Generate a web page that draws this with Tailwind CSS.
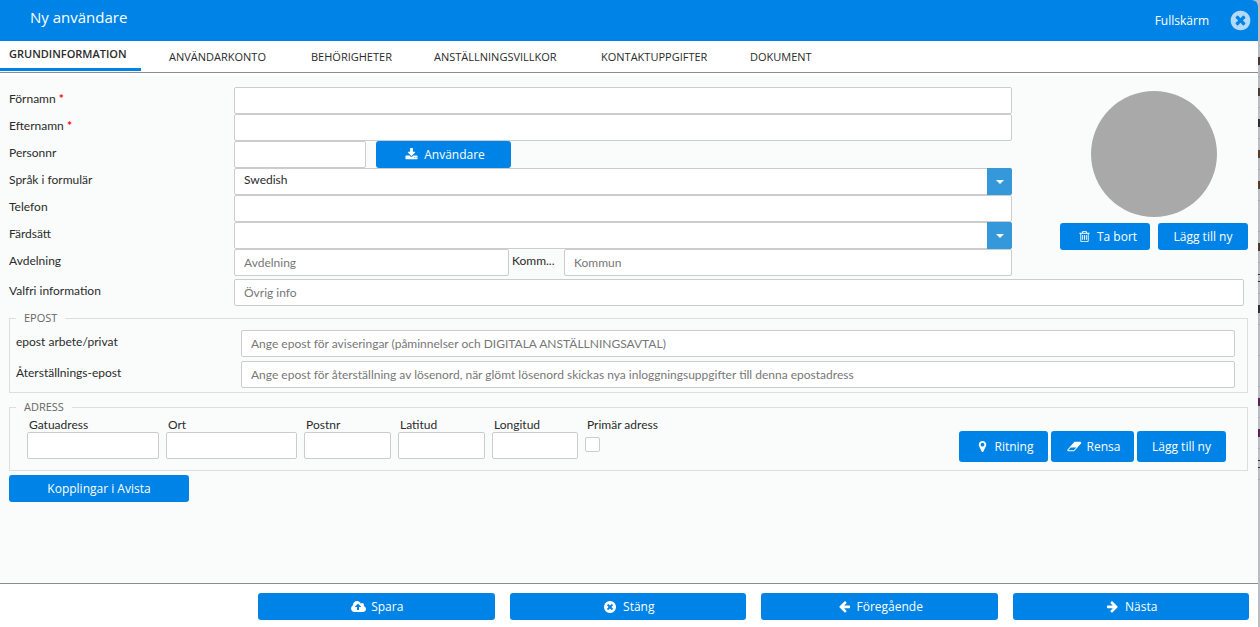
<!DOCTYPE html>
<html lang="sv">
<head>
  <meta charset="UTF-8" />
  <meta name="viewport" content="width=device-width, initial-scale=1.0"/>
  <title>Ny användare</title>
  <script src="https://cdn.jsdelivr.net/npm/@tailwindcss/browser@4"></script>
</head>
<body class="flex min-h-screen overflow-hidden bg-[#b9bcc4] font-['Lato','Open_Sans',sans-serif] text-[12px] text-[#2b2b2b]">

  <!-- Icons -->
  <svg class="hidden">
    <symbol id="i-close" viewBox="0 0 1792 1792"><path d="M1277 1122q0-26-19-45l-181-181 181-181q19-19 19-45 0-27-19-46l-90-90q-19-19-46-19-26 0-45 19l-181 181-181-181q-19-19-45-19-27 0-46 19l-90 90q-19 19-19 46 0 26 19 45l181 181-181 181q-19 19-19 45 0 27 19 46l90 90q19 19 46 19 26 0 45-19l181-181 181 181q19 19 45 19 27 0 46-19l90-90q19-19 19-46zm387-226q0 209-103 385.5t-279.5 279.5-385.5 103-385.5-103-279.5-279.5-103-385.5 103-385.5 279.5-279.5 385.5-103 385.5 103 279.5 279.5 103 385.5z"/></symbol>
    <symbol id="i-download" viewBox="0 0 1792 1792"><path d="M1344 1344q0-26-19-45t-45-19-45 19-19 45 19 45 45 19 45-19 19-45zm256 0q0-26-19-45t-45-19-45 19-19 45 19 45 45 19 45-19 19-45zm128-224v320q0 40-28 68t-68 28h-1472q-40 0-68-28t-28-68v-320q0-40 28-68t68-28h465l135 136q58 56 136 56t136-56l136-136h464q40 0 68 28t28 68zm-325-569q17 41-14 70l-448 448q-18 19-45 19t-45-19l-448-448q-31-29-14-70 17-39 59-39h256v-448q0-26 19-45t45-19h256q26 0 45 19t19 45v448h256q42 0 59 39z"/></symbol>
    <symbol id="i-trash" viewBox="0 0 1792 1792"><path d="M704 736v576q0 14-9 23t-23 9h-64q-14 0-23-9t-9-23v-576q0-14 9-23t23-9h64q14 0 23 9t9 23zm256 0v576q0 14-9 23t-23 9h-64q-14 0-23-9t-9-23v-576q0-14 9-23t23-9h64q14 0 23 9t9 23zm256 0v576q0 14-9 23t-23 9h-64q-14 0-23-9t-9-23v-576q0-14 9-23t23-9h64q14 0 23 9t9 23zm128 724v-948h-896v948q0 22 7 40.5t14.5 27 10.5 8.5h832q3 0 10.5-8.5t14.5-27 7-40.5zm-672-1076h448l-48-117q-7-9-17-11h-317q-10 2-17 11zm928 32v64q0 14-9 23t-23 9h-96v948q0 83-47 143.5t-113 60.5h-832q-66 0-113-58.5t-47-141.5v-952h-96q-14 0-23-9t-9-23v-64q0-14 9-23t23-9h309l70-167q15-37 54-63t79-26h320q40 0 79 26t54 63l70 167h309q14 0 23 9t9 23z"/></symbol>
    <symbol id="i-marker" viewBox="0 0 1792 1792"><path d="M1152 640q0-106-75-181t-181-75-181 75-75 181 75 181 181 75 181-75 75-181zm256 0q0 109-33 179l-364 774q-16 33-47.5 52t-67.5 19-67.5-19-46.5-52l-365-774q-33-70-33-179 0-212 150-362t362-150 362 150 150 362z"/></symbol>
    <symbol id="i-eraser" viewBox="-64 0 1984 1792"><path d="M832 1408l336-384h-768l-336 384h768zm1013-1077q15 34 9.5 71.5t-30.5 65.5l-896 1024q-38 44-96 44h-768q-38 0-69.5-20.5t-47.5-54.5q-15-34-9.5-71.5t30.5-65.5l896-1024q38-44 96-44h768q38 0 69.5 20.5t47.5 54.5z"/></symbol>
    <symbol id="i-upload" viewBox="-64 0 1920 1792"><path d="M1216 864q0-14-9-23l-352-352q-9-9-23-9t-23 9l-351 351q-10 12-10 24 0 14 9 23t23 9h224v352q0 13 9.5 22.5t22.5 9.5h192q13 0 22.5-9.5t9.5-22.5v-352h224q13 0 22.5-9.5t9.5-22.5zm640 288q0 159-112.5 271.5t-271.5 112.5h-1088q-185 0-316.5-131.5t-131.5-316.5q0-130 70-240t188-165q-2-30-2-43 0-212 150-362t362-150q156 0 285.5 87t188.5 231q71-62 166-62 106 0 181 75t75 181q0 76-41 138 130 31 213.5 135.5t83.5 238.5z"/></symbol>
    <symbol id="i-arrow" viewBox="0 0 1792 1792"><path d="M1664 896v128q0 53-32.5 90.5t-84.5 37.5h-704l293 294q38 36 38 90t-38 90l-75 76q-37 37-90 37-52 0-91-37l-651-652q-37-37-37-90 0-52 37-91l651-650q38-38 91-38 52 0 90 38l75 74q38 38 38 91t-38 91l-293 293h704q52 0 84.5 37.5t32.5 90.5z"/></symbol>
  </svg>

  <div class="flex min-w-0 flex-1 flex-col overflow-hidden rounded-tr-md bg-white">
    <header class="flex h-[41px] items-center bg-[#0083e6] pr-[6px] pl-[30px] font-['Open_Sans',sans-serif] text-white">
      <h1 class="mr-auto pb-[6px] text-[15px]">Ny användare</h1>
      <button type="button" class="mr-5">Fullskärm</button>
      <button type="button" aria-label="Stäng fönster"><svg class="size-[23px] fill-white/70"><use href="#i-close"/></svg></button>
    </header>

    <nav class="flex h-8 border-b border-[#8c8c8c] font-['Open_Sans',sans-serif] text-[11px] leading-8">
      <a href="#" class="mr-7 h-[30px] w-[141px] border-b-3 border-[#0083e6] pl-[9px] leading-[26px] font-semibold">GRUNDINFORMATION</a>
      <a href="#" class="w-[142px]">ANVÄNDARKONTO</a>
      <a href="#" class="w-[123px]">BEHÖRIGHETER</a>
      <a href="#" class="w-[167px]">ANSTÄLLNINGSVILLKOR</a>
      <a href="#" class="w-[149px]">KONTAKTUPPGIFTER</a>
      <a href="#">DOKUMENT</a>
    </nav>

    <main class="mt-[3px] flex-1 bg-[#fafcfb] pt-[11px] pr-[10px] pl-[9px]">
      <div class="flex justify-between">
        <div class="grid flex-1 grid-cols-[225px_1fr] leading-6">
          <label for="fornamn">Förnamn <span class="font-bold text-[red]">*</span></label>
          <input id="fornamn" required class="h-[27px] w-full rounded-xs border border-[#ccc] bg-white px-[9px]">
          <label for="efternamn">Efternamn <span class="font-bold text-[red]">*</span></label>
          <input id="efternamn" required class="h-[27px] w-full rounded-xs border border-[#ccc] bg-white px-[9px]">
          <label for="personnr">Personnr</label>
          <div class="flex gap-[10px]">
            <input id="personnr" class="h-[27px] w-[132px] rounded-xs border border-[#ccc] bg-white px-[9px]">
            <button type="button" class="flex h-[27px] w-[135px] items-center justify-center gap-[6px] rounded-[3px] bg-[#0083e6] pl-[3px] font-['Open_Sans',sans-serif] text-white"><svg class="size-[13px] fill-current"><use href="#i-download"/></svg>Användare</button>
          </div>
          <label for="sprak">Språk i formulär</label>
          <div class="relative">
            <select id="sprak" class="block h-[27px] w-full appearance-none rounded-xs border border-[#ccc] bg-white px-[9px] pb-1 leading-5">
              <option>Swedish</option>
            </select>
            <span class="pointer-events-none absolute top-0 right-0 flex h-[27px] w-[25px] items-center justify-center rounded-r-xs bg-[#3598db]"><svg class="h-1 w-2 fill-white" viewBox="0 0 8 4"><path d="M0 0h8L4 4z"/></svg></span>
          </div>
          <label for="telefon">Telefon</label>
          <input id="telefon" type="tel" class="h-[27px] w-full rounded-xs border border-[#ccc] bg-white px-[9px]">
          <label for="fardsatt">Färdsätt</label>
          <div class="relative">
            <select id="fardsatt" class="block h-[27px] w-full appearance-none rounded-xs border border-[#ccc] bg-white px-[9px] pb-1 leading-5">
              <option></option>
            </select>
            <span class="pointer-events-none absolute top-0 right-0 flex h-[27px] w-[25px] items-center justify-center rounded-r-xs bg-[#3598db]"><svg class="h-1 w-2 fill-white" viewBox="0 0 8 4"><path d="M0 0h8L4 4z"/></svg></span>
          </div>
          <label for="avdelning">Avdelning</label>
          <div class="flex">
            <input id="avdelning" placeholder="Avdelning" class="h-[27px] w-[275px] rounded-xs border border-[#ccc] bg-white px-[9px] placeholder:text-[#777]">
            <label for="kommun" class="mr-[6px] ml-[3px] w-[46px]">Komm...</label>
            <input id="kommun" placeholder="Kommun" class="h-[27px] min-w-0 flex-1 rounded-xs border border-[#ccc] bg-white px-[9px] placeholder:text-[#777]">
          </div>
        </div>

        <div class="ml-12 flex w-[188px] flex-col items-center pt-1 font-['Open_Sans',sans-serif]">
          <div class="size-[126px] rounded-full bg-[#a9a9a9]"></div>
          <div class="mt-[6px] flex gap-2">
            <button type="button" class="flex h-[27px] w-[90px] items-center justify-center gap-[6px] rounded-[3px] bg-[#0083e6] pl-[5px] text-white"><svg class="size-[13px] fill-current"><use href="#i-trash"/></svg>Ta bort</button>
            <button type="button" class="h-[27px] w-[90px] rounded-[3px] bg-[#0083e6] text-white">Lägg till ny</button>
          </div>
        </div>
      </div>

      <div class="mt-[3px] grid grid-cols-[225px_1fr] pr-1 leading-6">
        <label for="info">Valfri information</label>
        <input id="info" placeholder="Övrig info" class="h-[27px] w-full rounded-xs border border-[#ccc] bg-white px-[9px] placeholder:text-[#777]">
      </div>

      <fieldset class="mt-[3px] border border-[#ddd] pr-3 pb-1 pl-[6px]">
        <legend class="px-2 font-['Open_Sans',sans-serif] text-[11px] leading-[18px] text-[#666]">EPOST</legend>
        <div class="mt-[3px] grid grid-cols-[225px_1fr] gap-y-1 leading-6">
          <label for="epost">epost arbete/privat</label>
          <input id="epost" type="email" placeholder="Ange epost för aviseringar (påminnelser och DIGITALA ANSTÄLLNINGSAVTAL)" class="h-[27px] w-full rounded-xs border border-[#ccc] bg-white px-[9px] placeholder:text-[#777]">
          <label for="reset">Återställnings-epost</label>
          <input id="reset" type="email" placeholder="Ange epost för återställning av lösenord, när glömt lösenord skickas nya inloggningsuppgifter till denna epostadress" class="h-[27px] w-full rounded-xs border border-[#ccc] bg-white px-[9px] placeholder:text-[#777]">
        </div>
      </fieldset>

      <fieldset class="mt-[5px] border border-[#ddd] pr-[21px] pb-[11px] pl-[6px]">
        <legend class="px-2 font-['Open_Sans',sans-serif] text-[11px] leading-[18px] text-[#666]">ADRESS</legend>
        <div class="flex items-end gap-[7px] pl-[11px]">
          <div class="w-[132px]">
            <label for="gata" class="block h-4 pl-[2px] leading-[18px]">Gatuadress</label>
            <input id="gata" class="block h-[27px] w-full rounded-xs border border-[#ccc] bg-white px-[9px]">
          </div>
          <div class="w-[131px]">
            <label for="ort" class="block h-4 pl-[2px] leading-[18px]">Ort</label>
            <input id="ort" class="block h-[27px] w-full rounded-xs border border-[#ccc] bg-white px-[9px]">
          </div>
          <div class="w-[87px]">
            <label for="postnr" class="block h-4 pl-[2px] leading-[18px]">Postnr</label>
            <input id="postnr" class="block h-[27px] w-full rounded-xs border border-[#ccc] bg-white px-[9px]">
          </div>
          <div class="w-[87px]">
            <label for="lat" class="block h-4 pl-[2px] leading-[18px]">Latitud</label>
            <input id="lat" class="block h-[27px] w-full rounded-xs border border-[#ccc] bg-white px-[9px]">
          </div>
          <div class="w-[86px]">
            <label for="lng" class="block h-4 pl-[2px] leading-[18px]">Longitud</label>
            <input id="lng" class="block h-[27px] w-full rounded-xs border border-[#ccc] bg-white px-[9px]">
          </div>
          <div class="h-[43px]">
            <label for="primar" class="block h-4 pl-[2px] leading-[18px]">Primär adress</label>
            <input id="primar" type="checkbox" class="mt-[5px] block size-[15px] appearance-none rounded-xs border border-[#ccc] bg-white checked:bg-[#0083e6]">
          </div>
          <div class="-mb-[3px] ml-auto flex gap-[3px] font-['Open_Sans',sans-serif]">
            <button type="button" class="flex h-[31px] w-[89px] items-center justify-center gap-[6px] rounded-[3px] bg-[#0083e6] pl-[2px] text-white"><svg class="size-[13px] fill-current"><use href="#i-marker"/></svg>Ritning</button>
            <button type="button" class="flex h-[31px] w-[83px] items-center justify-center gap-[5px] rounded-[3px] bg-[#0083e6] pl-[2px] text-white"><svg class="h-[13px] w-[15px] fill-current"><use href="#i-eraser"/></svg>Rensa</button>
            <button type="button" class="h-[31px] w-[89px] rounded-[3px] bg-[#0083e6] text-white">Lägg till ny</button>
          </div>
        </div>
      </fieldset>

      <button type="button" class="mt-1 block h-[27px] w-[180px] rounded-[3px] bg-[#0083e6] font-['Open_Sans',sans-serif] text-white">Kopplingar i Avista</button>
    </main>

    <footer class="grid grid-cols-4 gap-[15px] border-t border-[#8c8c8c] pt-[9px] pr-[9px] pb-[7px] pl-[258px] font-['Open_Sans',sans-serif] text-white">
      <button type="button" class="flex h-[27px] items-center justify-center gap-[5px] rounded-[3px] bg-[#0083e6] pl-[2px]"><svg class="h-[14px] w-[15px] fill-current"><use href="#i-upload"/></svg>Spara</button>
      <button type="button" class="flex h-[27px] items-center justify-center gap-[6px] rounded-[3px] bg-[#0083e6] pl-[2px]"><svg class="size-[14px] fill-current"><use href="#i-close"/></svg>Stäng</button>
      <button type="button" class="flex h-[27px] items-center justify-center gap-[6px] rounded-[3px] bg-[#0083e6] pl-[2px]"><svg class="size-[13px] fill-current"><use href="#i-arrow"/></svg>Föregående</button>
      <button type="button" class="flex h-[27px] items-center justify-center gap-[6px] rounded-[3px] bg-[#0083e6] pl-[2px]"><svg class="size-[13px] -scale-x-100 fill-current"><use href="#i-arrow"/></svg>Nästa</button>
    </footer>
  </div>

  <!-- Edge of the list behind the dialog -->
  <div class="flex w-[2px] shrink-0 flex-col pt-[46px]" aria-hidden="true">
    <div class="flex h-[31px] items-center border-b border-[#a5a8b0]"><i class="h-2 w-full bg-[#4a3a30]"></i></div>
    <div class="flex h-[31px] items-center border-b border-[#a5a8b0]"><i class="h-2 w-full bg-[#4a3a30]"></i></div>
    <div class="flex h-[31px] items-center border-b border-[#a5a8b0]"><i class="h-2 w-full bg-[#2c2c34]"></i></div>
    <div class="flex h-[31px] items-center border-b border-[#a5a8b0]"><i class="h-2 w-full bg-[#5a3a28]"></i></div>
    <div class="flex h-[31px] items-center border-b border-[#a5a8b0]"><i class="h-2 w-full bg-[#5a3a28]"></i></div>
    <div class="flex h-[31px] items-center border-b border-[#a5a8b0]"></div>
    <div class="flex h-[31px] items-center border-b border-[#a5a8b0]"><i class="h-2 w-full bg-[#4a3a30]"></i></div>
    <div class="flex h-[31px] items-center border-b border-[#a5a8b0]"><i class="h-2 w-full border-y border-[#2c2c34]"></i></div>
    <div class="flex h-[31px] items-center border-b border-[#a5a8b0]"><i class="h-2 w-full bg-[#2c2c34]"></i></div>
    <div class="flex h-[31px] items-center border-b border-[#a5a8b0]"></div>
    <div class="flex h-[31px] items-center border-b border-[#a5a8b0]"></div>
    <div class="flex h-[31px] items-center border-b border-[#a5a8b0]"><i class="h-2 w-full bg-[#5c2050]"></i></div>
    <div class="flex h-[31px] items-center border-b border-[#a5a8b0]"><i class="h-2 w-full bg-[#5c2050]"></i></div>
    <div class="flex h-[31px] items-center border-b border-[#a5a8b0]"><i class="h-2 w-full border-y border-[#2c2c34]"></i></div>
  </div>
</body>
</html>
